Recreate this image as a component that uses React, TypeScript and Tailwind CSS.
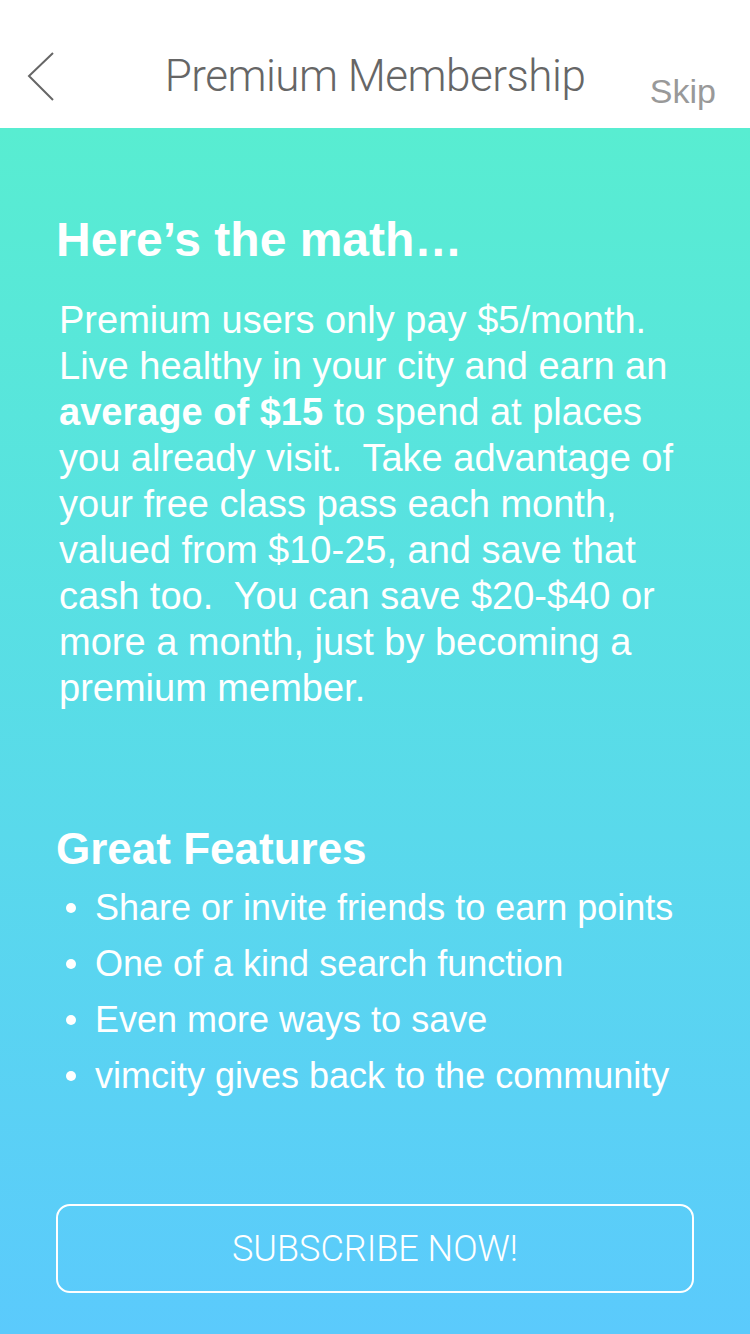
const features = [
  "Share or invite friends to earn points",
  "One of a kind search function",
  "Even more ways to save",
  "vimcity gives back to the community",
];

const App = () => {
  return (
    <div className="min-h-[1334px] w-[750px] flex flex-col font-['Liberation_Sans',Arial,sans-serif]">
      {/* Nav bar */}
      <header className="h-[128px] bg-white grid grid-cols-[1fr_auto_1fr] items-start">
        <div className="pt-[52px] pl-[20px]">
          <svg width="40" height="50" viewBox="0 0 40 50" className="text-[#666]">
            <path d="M33 1 L9 24 L33 48" fill="none" stroke="currentColor" strokeWidth="2" />
          </svg>
        </div>
        <h1 className="pt-[53px] text-[44px] leading-[46px] font-light text-[#666] font-['Roboto',sans-serif] tracking-[-0.5px]">
          Premium Membership
        </h1>
        <div className="flex justify-end pr-[34px] pt-[71px]">
          <span className="text-[34px] leading-[40px] text-[#999]">Skip</span>
        </div>
      </header>

      {/* Content */}
      <main className="flex-1 flex flex-col px-[56px] pb-[42px] bg-gradient-to-b from-[#58EDD1] to-[#5BCAFC] text-white">
        <h2 className="mt-[84px] text-[48px] leading-[56px] font-bold">Here’s the math…</h2>
        <p className="mt-[29px] pl-[3px] text-[38px] leading-[46px] whitespace-nowrap">
          Premium users only pay $5/month.
          <br />
          Live healthy in your city and earn an
          <br />
          <span className="font-bold">average of $15</span> to spend at places
          <br />
          you already visit.&nbsp; Take advantage of
          <br />
          your free class pass each month,
          <br />
          valued from $10-25, and save that
          <br />
          cash too.&nbsp; You can save $20-$40 or
          <br />
          more a month, just by becoming a
          <br />
          premium member.
        </p>

        <h2 className="mt-[112px] text-[44px] leading-[52px] font-bold">Great Features</h2>
        <ul className="mt-[5px]">
          {features.map((f) => (
            <li key={f} className="flex items-center h-[56px] text-[36px] leading-[56px]">
              <span className="w-[10px] h-[10px] rounded-full bg-white ml-[10px] mr-[19px] shrink-0" />
              <span className="whitespace-nowrap">{f}</span>
            </li>
          ))}
        </ul>

        <button className="mt-[100px] h-[89px] w-full rounded-[14px] border-2 border-white text-[36px] font-light font-['Roboto',sans-serif] text-white">
          SUBSCRIBE NOW!
        </button>
      </main>
    </div>
  );
};

export default App;
